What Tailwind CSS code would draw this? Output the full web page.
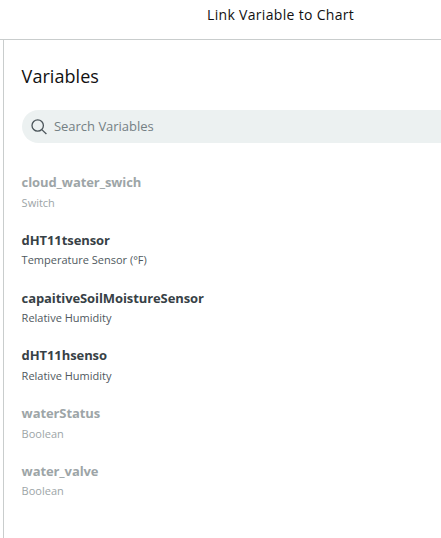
<!DOCTYPE html>
<html lang="en">
<head>
<meta charset="utf-8">
<title>Link Variable to Chart</title>
<script src="https://cdn.jsdelivr.net/npm/@tailwindcss/browser@4"></script>
</head>
<body class="h-[538px] w-[441px] overflow-hidden bg-white font-['Open_Sans',sans-serif] text-[#374146]">
<div class="flex h-full flex-col">
  <header class="h-10 shrink-0 border-b border-[#c9cdcd] pl-[207px] pt-[5px]">
    <h1 class="whitespace-nowrap text-[14px] leading-5 tracking-[0.32px] text-[#111111]">Link Variable to Chart</h1>
  </header>
  <main class="ml-[3px] flex-1 border-l border-[#c9cdcd] pl-[17.6px] pt-[24px]">
    <h2 class="text-[18px] leading-6 tracking-[0.06px] text-[#111111]">Variables</h2>
    <div class="mt-[22px] flex h-[33px] items-center rounded-l-full bg-[#ecf1f1] pl-[9.4px]">
      <svg class="size-4" viewBox="0 0 16 16" fill="none" stroke="#4b555a" stroke-width="1.3"><circle cx="6.7" cy="6.5" r="5.7"/><path d="M10.8 10.6 15.4 15"/></svg>
      <span class="mb-[2px] ml-[7px] text-[13px] leading-5 tracking-[-0.02px] text-[#748084]">Search Variables</span>
    </div>
    <ul class="mt-[29px] whitespace-nowrap">
      <li class="h-[57.78px] text-[#9da5a7]"><p class="text-[13px] font-bold leading-5 tracking-[-0.09px]">cloud_water_swich</p><p class="mt-[0.53px] text-[11px] leading-5">Switch</p></li>
      <li class="h-[57.78px]"><p class="text-[13px] font-bold leading-5 tracking-[-0.09px]">dHT11tsensor</p><p class="mt-[0.53px] text-[11px] leading-5 text-[#4f595e]">Temperature Sensor (°F)</p></li>
      <li class="h-[57.78px]"><p class="text-[13px] font-bold leading-5 tracking-[-0.09px]">capaitiveSoilMoistureSensor</p><p class="mt-[0.53px] text-[11px] leading-5 text-[#4f595e]">Relative Humidity</p></li>
      <li class="h-[57.78px]"><p class="text-[13px] font-bold leading-5 tracking-[-0.09px]">dHT11hsenso</p><p class="mt-[0.53px] text-[11px] leading-5 text-[#4f595e]">Relative Humidity</p></li>
      <li class="h-[57.78px] text-[#9da5a7]"><p class="text-[13px] font-bold leading-5 tracking-[-0.09px]">waterStatus</p><p class="mt-[0.53px] text-[11px] leading-5">Boolean</p></li>
      <li class="h-[57.78px] text-[#9da5a7]"><p class="text-[13px] font-bold leading-5 tracking-[-0.09px]">water_valve</p><p class="mt-[0.53px] text-[11px] leading-5">Boolean</p></li>
    </ul>
  </main>
</div>
</body>
</html>
